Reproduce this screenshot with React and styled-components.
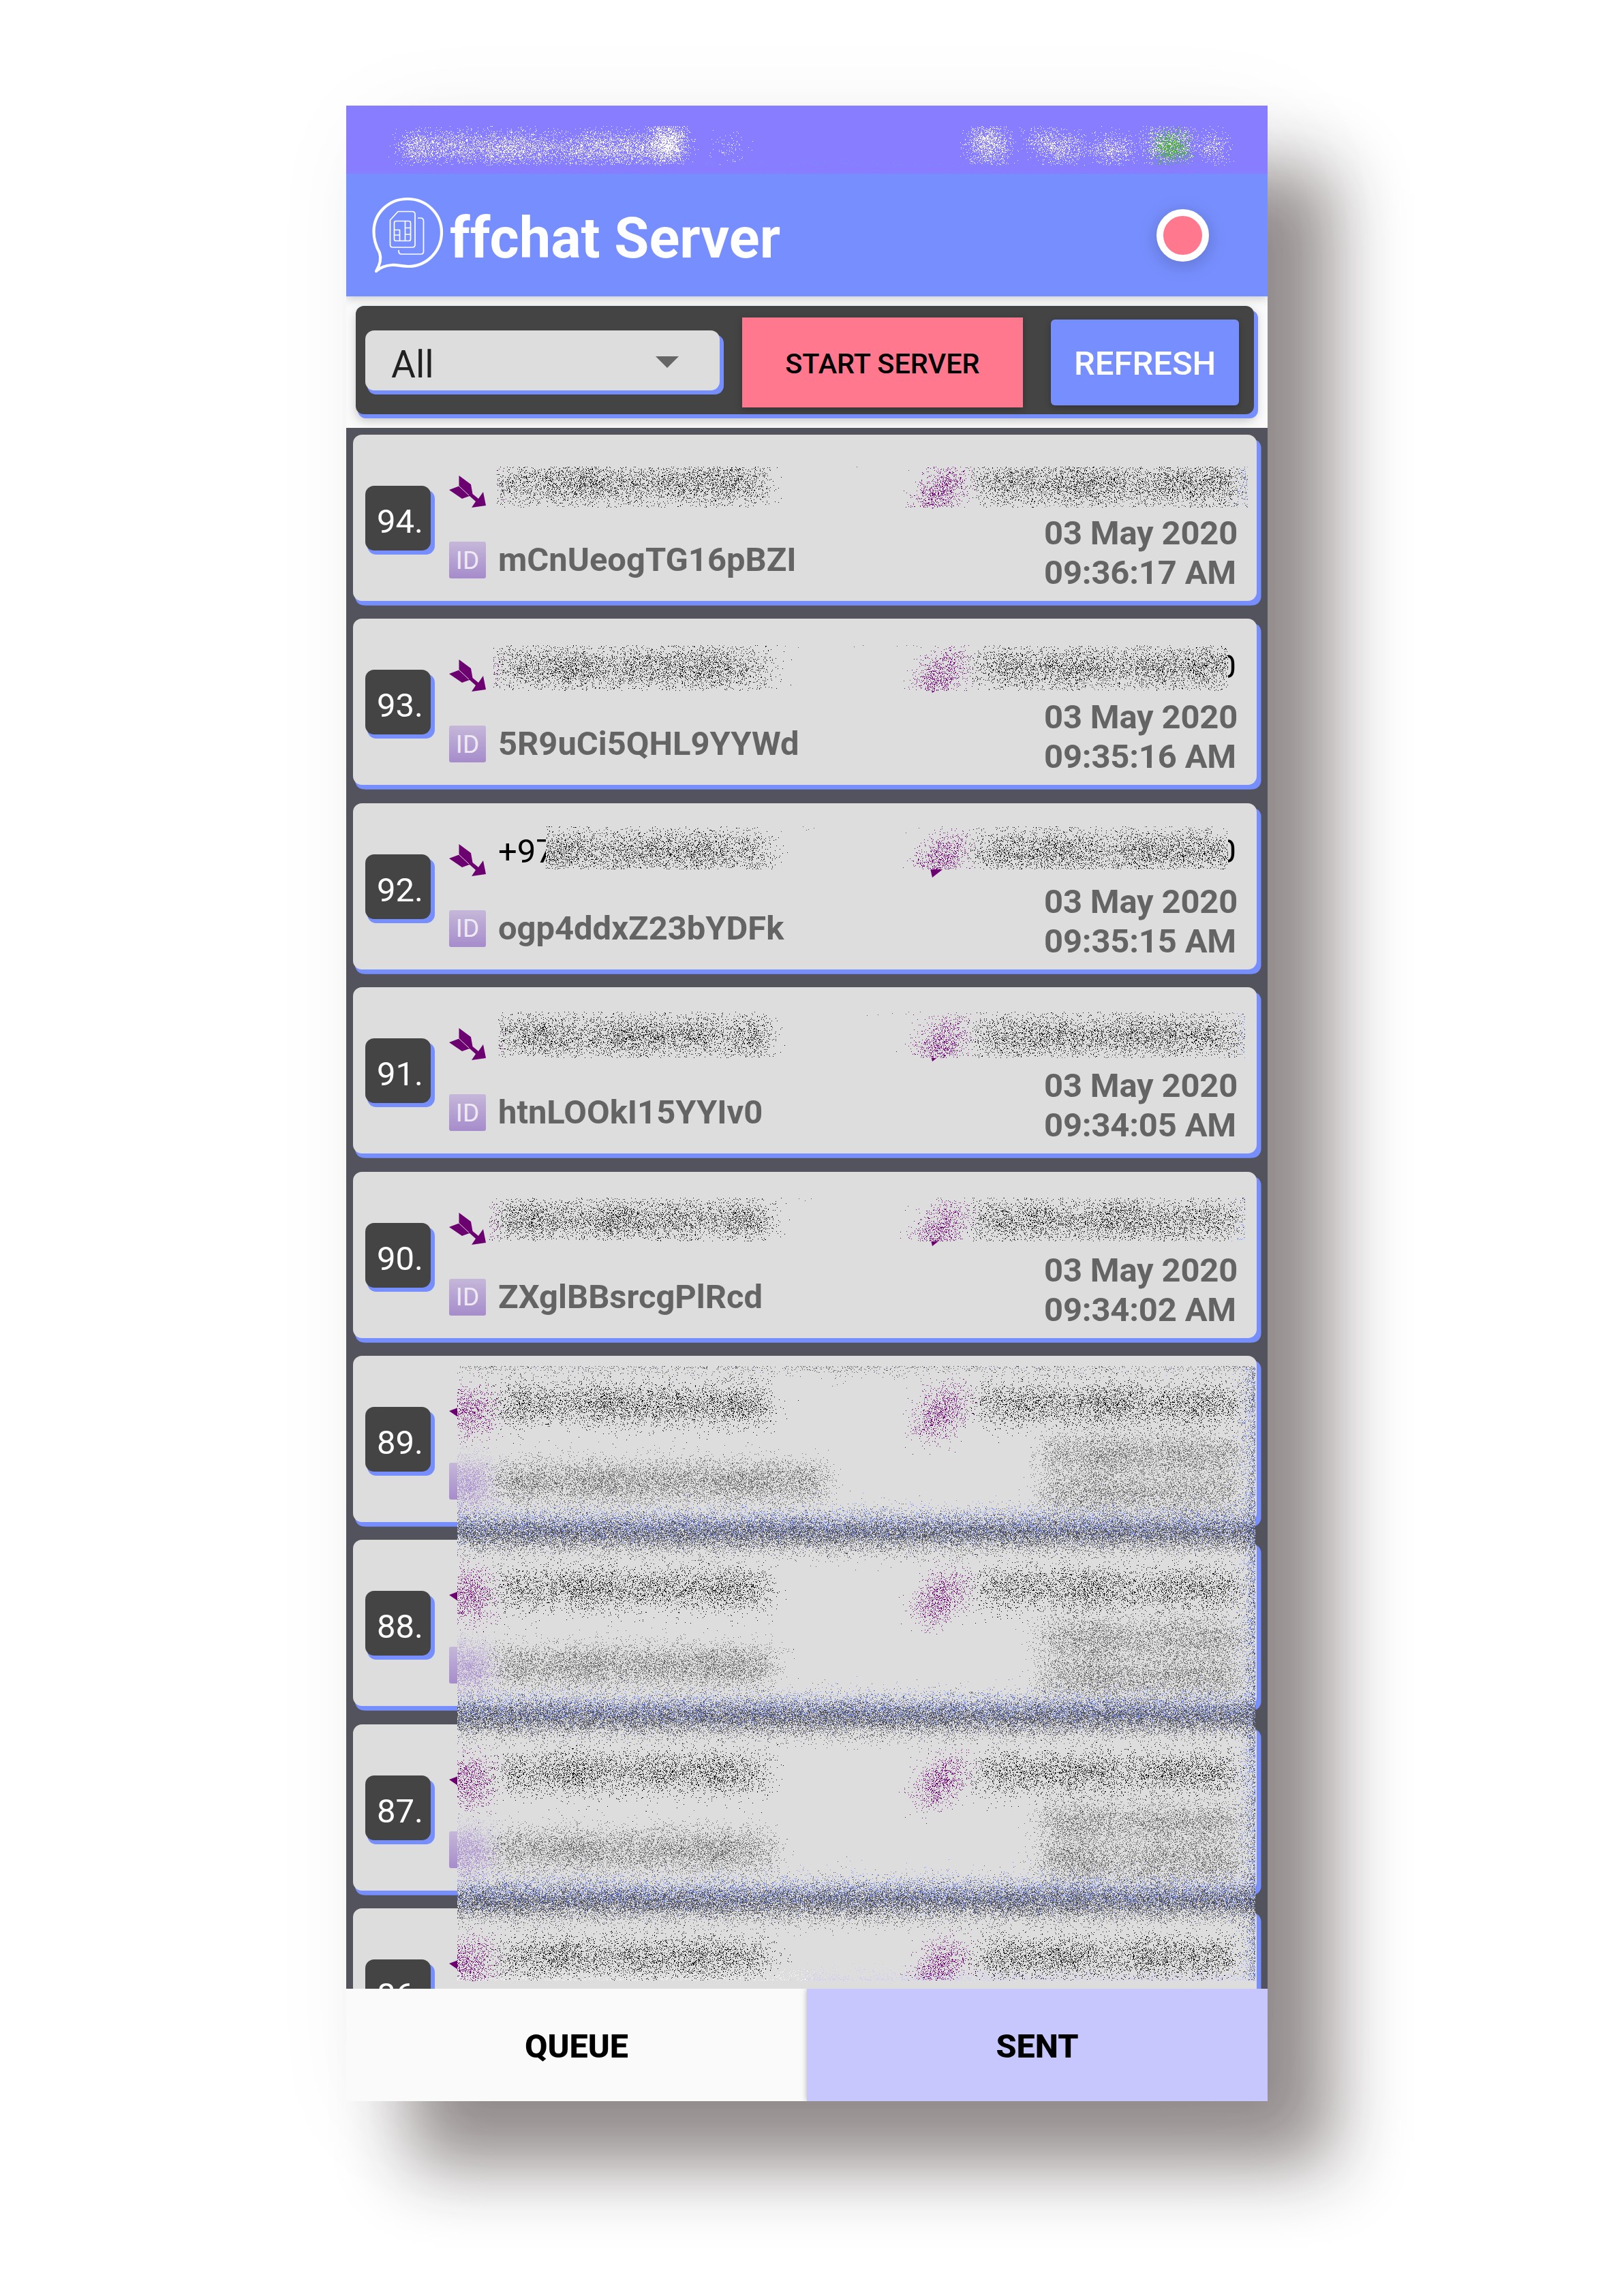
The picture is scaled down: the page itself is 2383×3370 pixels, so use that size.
import React, { useEffect, useRef } from "react";
import styled, { createGlobalStyle } from "styled-components";

const Global = createGlobalStyle`
  body { margin: 0; background: #fff; font-family: Roboto, "Liberation Sans", sans-serif; }
  * { box-sizing: border-box; }
`;

const BLUE = "#778ffe";
const PHONE_W = 1352;
const PHONE_H = 2929;

const Stage = styled.main`
  width: 2383px;
  height: 3370px;
  padding: 155px 0 0 508px;
  overflow: hidden;
`;
const Phone = styled.div`
  position: relative;
  width: ${PHONE_W}px;
  height: ${PHONE_H}px;
  display: flex;
  flex-direction: column;
  background: #fafafa;
  box-shadow: 95px 95px 100px rgba(38, 22, 22, 0.48), 30px 30px 150px rgba(0, 0, 0, 0.06);
`;
const StatusBar = styled.div`
  position: relative;
  z-index: 1;
  height: 100px;
  flex: none;
  background: #887dfe;
`;
const Header = styled.header`
  position: relative;
  height: 180px;
  flex: none;
  display: flex;
  align-items: center;
  padding: 0 86px 0 32px;
  background: ${BLUE};
  box-shadow: 0 2px 14px rgba(0, 0, 0, 0.22);
  clip-path: inset(0 0 -24px 0);
`;
const Logo = styled.svg`
  width: 130px;
  height: 130px;
  flex: none;
  margin-right: -10px;
`;
const Title = styled.h1`
  flex: 1;
  margin: 0;
  padding-top: 9px;
  font-size: 83px;
  line-height: 96px;
  font-weight: 700;
  white-space: nowrap;
  color: #fff;
`;
const RecordDot = styled.button`
  width: 77px;
  height: 77px;
  padding: 0;
  border: 10px solid #fff;
  border-radius: 50%;
  background: #ff788e;
  box-shadow: 0 5px 28px rgba(0, 0, 0, 0.2);
`;
const ToolArea = styled.div`
  height: 193px;
  flex: none;
  padding: 14px 20px 0 14px;
`;
const Tools = styled.div`
  height: 159px;
  display: flex;
  align-items: flex-start;
  padding: 17px 22px 0 14px;
  border-radius: 12px;
  background: #444;
  box-shadow: 3px 6px 0 ${BLUE}, 6px 6px 0 ${BLUE}, 2px 8px 16px rgba(0, 0, 0, 0.25);
`;
const Select = styled.div`
  width: 520px;
  height: 88px;
  margin-top: 19px;
  display: flex;
  align-items: center;
  justify-content: space-between;
  padding: 11px 60px 0 38px;
  border-radius: 13px;
  background: #ddd;
  box-shadow: 3px 6px 0 ${BLUE}, 6px 6px 0 ${BLUE};
  color: #202020;
  font-size: 55px;
`;
const Caret = styled.span`
  border: 17px solid transparent;
  border-top-color: #666;
  border-bottom: 0;
  margin-bottom: 7px;
`;
const ToolButton = styled.button`
  width: ${(p) => p.$w}px;
  height: ${(p) => p.$h}px;
  margin: ${(p) => p.$m};
  padding: 3px 0 0;
  border: 0;
  border-radius: ${(p) => p.$r}px;
  background: ${(p) => p.$bg};
  color: ${(p) => p.$fg};
  font-family: inherit;
  font-size: ${(p) => p.$size}px;
  font-weight: 500;
  white-space: nowrap;
  box-shadow: 0 3px 10px rgba(0, 0, 0, 0.25);
`;
const List = styled.div`
  height: 2291px;
  flex: none;
  overflow: hidden;
  display: flex;
  flex-direction: column;
  gap: 26.4px;
  padding: 10px 16px 0 10px;
  background: #53535d;
`;
const Card = styled.article`
  height: 244px;
  flex: none;
  display: flex;
  align-items: flex-start;
  padding: 0 30px 0 18px;
  border-radius: 13px;
  background: #ddd;
  box-shadow: 3px 6.5px 0 ${BLUE}, 6.5px 6.5px 0 ${BLUE};
`;
const Badge = styled.div`
  width: 96px;
  height: 95px;
  margin-top: 75px;
  flex: none;
  display: flex;
  align-items: center;
  padding: 10px 0 0 17px;
  border-radius: 13px;
  background: #444;
  box-shadow: 3px 6px 0 ${BLUE}, 6px 6px 0 ${BLUE};
  color: #fff;
  font-size: 49px;
`;
const Glyphs = styled.div`
  width: 54px;
  margin: 60px 0 0 27px;
  display: flex;
  flex-direction: column;
  gap: 50px;
`;
const Arrow = styled.svg`
  width: 54px;
  height: 47px;
`;
const Incoming = styled.svg`
  width: 48px;
  height: 58px;
  margin-top: 9px;
  flex: none;
`;
const IdIcon = styled.div`
  width: 54px;
  height: 54px;
  display: flex;
  align-items: center;
  justify-content: center;
  border-radius: 3px;
  background: linear-gradient(#c5b7d9, #a68ccb);
  color: #eee9f4;
  font-size: 37px;
`;
const Details = styled.div`
  flex: 1;
  margin: 42px 0 0 18px;
  display: flex;
  flex-direction: column;
  gap: 55px;
`;
const Phones = styled.div`
  height: 58px;
  display: flex;
  color: #000;
  font-size: 49px;
  line-height: 58px;
  white-space: nowrap;
`;
const Sender = styled.span`
  width: 632px;
  flex: none;
`;
const Receiver = styled.span`
  flex: 1;
  text-align: right;
`;
const Info = styled.div`
  height: 58px;
  display: flex;
  justify-content: space-between;
  align-items: flex-start;
  color: #646464;
  font-size: 48.9px;
  line-height: 58px;
  font-weight: 700;
  white-space: nowrap;
`;
const Stamp = styled.div`
  width: 282px;
  margin-top: -39px;
  letter-spacing: -0.15px;
`;
const Tabs = styled.nav`
  height: 165px;
  flex: none;
  display: flex;
`;
const Tab = styled.button`
  flex: 1;
  padding: 4px 0 0;
  border: 0;
  background: ${(p) => (p.$active ? "#c7c7fe" : "#fafafa")};
  box-shadow: ${(p) => (p.$active ? "0 0 8px rgba(0,0,0,.3)" : "none")};
  clip-path: inset(0 0 0 -10px);
  color: #000;
  font-family: inherit;
  font-size: 48.5px;
  font-weight: 800;
`;
const Spray = styled.canvas`
  position: absolute;
  z-index: 2;
  left: 0;
  top: 0;
  pointer-events: none;
`;

const rows = [
  { n: 94, id: "mCnUeogTG16pBZI", time: "09:36:17 AM" },
  { n: 93, id: "5R9uCi5QHL9YYWd", time: "09:35:16 AM", to: "0" },
  { n: 92, id: "ogp4ddxZ23bYDFk", time: "09:35:15 AM", from: "+97", to: "0" },
  { n: 91, id: "htnLOOkI15YYIv0", time: "09:34:05 AM" },
  { n: 90, id: "ZXglBBsrcgPlRcd", time: "09:34:02 AM" },
  { n: 89 },
  { n: 88 },
  { n: 87 },
  { n: 86 },
];

/* Privacy spray: private areas are replaced by randomly displaced samples. */
const PITCH = 270.4;
const FIRST = 483;
const AREAS = [
  [60, 30, 1305, 88],
  [221, 530, 1323, 590],
  [216, 792, 1294, 859],
  [293, 1058, 1294, 1121],
  [223, 1330, 1319, 1398],
  [210, 1603, 1319, 1667],
  [162.5, 1850, 1333, 2752],
];
const STATUS = [
  [84, 135, 46, 76, 0.42, 0], [140, 198, 46, 76, 0.36, 0], [203, 278, 44, 78, 0.44, 0],
  [278, 340, 50, 76, 0.34, 0], [340, 448, 46, 78, 0.44, 0], [453, 491, 34, 76, 0.85, 0],
  [543, 580, 52, 70, 0.15, 0], [920, 964, 36, 76, 0.52, 0], [1006, 1032, 38, 60, 0.42, 0],
  [1026, 1074, 48, 76, 0.46, 0], [1100, 1147, 52, 76, 0.45, 0], [1178, 1237, 38, 74, 0.52, 0],
  [1190, 1230, 44, 78, 0.62, 1], [1264, 1284, 46, 74, 0.46, 0],
];

function makeRandom(seed) {
  let a = seed;
  return () => {
    a = (a + 0x6d2b79f5) | 0;
    let t = Math.imul(a ^ (a >>> 15), 1 | a);
    t = (t + Math.imul(t ^ (t >>> 7), 61 | t)) ^ t;
    return ((t ^ (t >>> 14)) >>> 0) / 4294967296;
  };
}

const WHITE = [250, 250, 250];
const C = {
  card: [221, 221, 221],
  gap: [83, 83, 93],
  blue: [119, 143, 254],
  black: [0, 0, 0],
  grey: [100, 100, 100],
  purple: [108, 0, 112],
};

function sampleStatus(x, y, rnd) {
  if (y >= 100) return C.blue;
  for (let i = STATUS.length - 1; i >= 0; i--) {
    const s = STATUS[i];
    if (x >= s[0] && x < s[1] && y >= s[2] && y < s[3] && rnd() < s[4]) {
      return s[5] ? [70, 185, 30] : WHITE;
    }
  }
  return null;
}

function sampleList(x, y, rnd) {
  if (y > 2764) return x < 676 ? WHITE : [199, 199, 254];
  const k = Math.floor((y - FIRST) / PITCH);
  const o = y - FIRST - k * PITCH;
  if (o > 250.5 || x > 1342.5) return C.gap;
  if (o > 244 || x > 1336) return C.blue;
  const wave = 0.28 + 0.04 * Math.sin(x / 17 + k) + 0.04 * Math.sin(x / 29 + 2 + k);
  if (o > 53 && o < 89) {
    if (x > 228 && x < 616 && rnd() < wave) return C.black;
    if (x > 930 && x < 1304 && rnd() < wave) return C.black;
  }
  if (o > 55 && o < 109) {
    const t = (o - 55) / 54;
    if (x > 151 && x < 205 && o < 107 && rnd() < 0.34) return C.purple;
    if (x > 840 && x < 905 && Math.abs(x - 890 + t * 36) < 18 && rnd() < 0.4 + 0.12 * t) return C.purple;
  }
  if (o > 157 && o < 211 && x > 151 && x < 205) {
    const g = (o - 157) / 54;
    return rnd() < 0.8 ? [197 - 30 * g, 183 - 42 * g, 218 - 14 * g] : C.card;
  }
  if (o > 165 && o < 205 && x > 225 && x < (k === 5 ? 698 : 622) && rnd() < wave + 0.12) return C.grey;
  if (x > 1022 && x < 1306) {
    if (((o > 125 && o < 165) || (o > 182 && o < 221)) && rnd() < wave + 0.08) return C.grey;
  }
  return C.card;
}

function PrivacySpray() {
  const ref = useRef(null);
  useEffect(() => {
    const ctx = ref.current.getContext("2d");
    const rnd = makeRandom(94);
    AREAS.forEach(([x0, y0, x1, y1], index) => {
      const w = Math.round(x1 - x0);
      const h = y1 - y0;
      const k = index ? 1.12 : 0.75;
      const image = ctx.createImageData(w, h);
      for (let j = 0; j < h; j++) {
        for (let i = 0; i < w; i++) {
          const r = 13 * Math.sqrt(-2 * Math.log(1 - rnd()));
          const a = rnd() * Math.PI * 2;
          const sx = x0 + i + Math.cos(a) * r * k;
          const sy = y0 + j + Math.sin(a) * r * k;
          const c = index ? sampleList(sx, sy, rnd) : sampleStatus(sx, sy, rnd);
          if (!c) continue;
          const p = (j * w + i) * 4;
          image.data[p] = c[0];
          image.data[p + 1] = c[1];
          image.data[p + 2] = c[2];
          image.data[p + 3] = 255;
        }
      }
      ctx.putImageData(image, Math.round(x0), y0);
    });
  }, []);
  return <Spray ref={ref} width={PHONE_W} height={PHONE_H} />;
}

function ChatLogo() {
  return (
    <Logo viewBox="0 0 130 130" fill="none" stroke="#fff">
      <path strokeWidth="4.2" strokeLinejoin="round" d="M12 118 C18 108 20 100 17 91 C12 82 8.500 72 8.500 60 C8.500 33 30 12 58 12 C86 12 108 34 108 61 C108 89 86 111 59 111 C49 111 44 108.500 35 109 C27 109.500 20 111 12 118 Z" />
      <g strokeWidth="1.700" strokeLinejoin="round">
        <path d="M44 30.500 H65 Q69 30.500 69 34.500 V79 Q69 83 65 83 H36.500 Q32.500 83 32.500 79 V43 Z" />
        <path d="M73 40 H77 Q81.500 40 81.500 44.500 V89 Q81.500 93 77.500 93 H49 Q45 93 45 88 V87" />
        <rect x="38.500" y="44.500" width="24" height="29" rx="2.500" />
        <path d="M54.500 44.500 V73.500 M54.500 54.500 H62.500 M54.500 64 H62.500 M38.500 57.500 H46.500 V73.500 M38.500 65 H46.500" />
      </g>
    </Logo>
  );
}

function ArrowGlyph() {
  return (
    <Arrow viewBox="0 0 54 47" fill="#6c0070">
      <path d="M14.500 0 L32 13 L34.500 27 L43 34 L50 24 L54 44 L33 47 L39 38 L30 30 L19 34 L0 21 L14.500 15.500 Z" />
      <path d="M14 15 L29 29" stroke="#ddd" strokeWidth="1" />
    </Arrow>
  );
}

function IncomingGlyph() {
  return (
    <Incoming viewBox="0 0 48 58" fill="#6c0070">
      <path d="M5 58 L0 36 L8 41 L16 29 L16 16 L32 0 L34 14 L48 18 L34 32 L22 34 L14 44 L24 43 Z" />
    </Incoming>
  );
}

export default function App() {
  return (
    <Stage>
      <Global />
      <Phone>
        <StatusBar />
        <Header>
          <ChatLogo />
          <Title>ffchat Server</Title>
          <RecordDot aria-label="Server status" />
        </Header>
        <ToolArea>
          <Tools>
            <Select>
              All
              <Caret />
            </Select>
            <ToolButton $w={413} $h={132} $m="0 0 0 33px" $r={0} $bg="#ff788e" $fg="#000" $size={41.4}>START SERVER</ToolButton>
            <ToolButton $w={276} $h={126} $m="3px 0 0 41px" $r={6} $bg={BLUE} $fg="#fff" $size={49}>REFRESH</ToolButton>
          </Tools>
        </ToolArea>
        <List>
          {rows.map((r) => (
            <Card key={r.n}>
              <Badge>{r.n}.</Badge>
              <Glyphs>
                <ArrowGlyph />
                <IdIcon>ID</IdIcon>
              </Glyphs>
              <Details>
                <Phones>
                  <Sender>{r.from}</Sender>
                  {r.n > 89 && <IncomingGlyph />}
                  <Receiver>{r.to}</Receiver>
                </Phones>
                {r.id && (
                  <Info>
                    <span>{r.id}</span>
                    <Stamp>
                      03 May 2020
                      <br />
                      {r.time}
                    </Stamp>
                  </Info>
                )}
              </Details>
            </Card>
          ))}
        </List>
        <Tabs>
          <Tab>QUEUE</Tab>
          <Tab $active>SENT</Tab>
        </Tabs>
        <PrivacySpray />
      </Phone>
    </Stage>
  );
}
